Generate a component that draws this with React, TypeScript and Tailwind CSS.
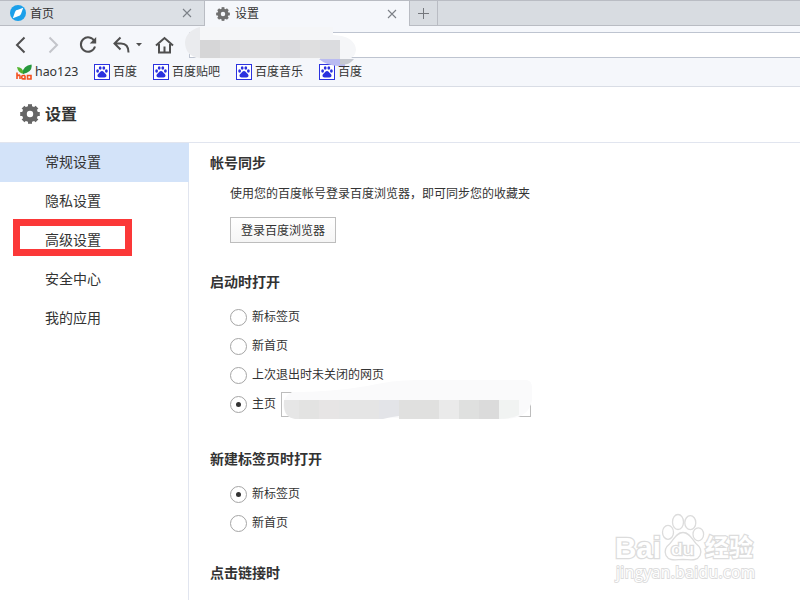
import React from 'react';

const sidebarItems = ['常规设置', '隐私设置', '高级设置', '安全中心', '我的应用'];

const bookmarks = ['百度', '百度贴吧', '百度音乐', '百度'];

const gearAngles = [0, 45, 90, 135, 180, 225, 270, 315];

interface GearProps {
    className: string;
}

const Gear: React.FC<GearProps> = ({ className }) => (
    <svg viewBox="0 0 20 20" className={className} fill="none" stroke="currentColor">
        <circle cx="10" cy="10" r="5.6" strokeWidth="4.8" />
        {gearAngles.map((a) => (
            <path key={a} d="M10 3.5V0.2" strokeWidth="4" transform={`rotate(${a} 10 10)`} />
        ))}
    </svg>
);

const CloseIcon: React.FC = () => (
    <svg viewBox="0 0 10 10" className="size-[10px]" stroke="#7c8087" strokeWidth="1.1">
        <path d="M1 1l8 8M9 1l-8 8" />
    </svg>
);

const Paw: React.FC = () => (
    <svg viewBox="0 0 16 16" className="size-4">
        <rect x="0.5" y="0.5" width="15" height="15" fill="#fff" stroke="#2b32df" />
        <g fill="#2b32df">
            <ellipse cx="3.6" cy="7" rx="1.4" ry="1.7" />
            <ellipse cx="6.2" cy="4" rx="1.4" ry="1.8" />
            <ellipse cx="9.8" cy="4" rx="1.4" ry="1.8" />
            <ellipse cx="12.4" cy="7" rx="1.4" ry="1.7" />
            <path d="M8 6.9c1.5 0 1.9 1.4 3 2.4 1.3 1 1.8 2 1.4 3-.6 1.5-2.6 1.2-4.4 1.2s-3.8.3-4.4-1.2c-.4-1 .1-2 1.4-3 1.1-1 1.5-2.4 3-2.4z" />
        </g>
    </svg>
);

const TabBar: React.FC = () => (
    <div className="flex h-[26px] border-t border-[#b9bcc3] bg-[#d8dce1]">
        <div className="flex w-[205px] items-center border-r border-b border-[#b9bcc3] bg-[#dce0e5] pr-[12px] pl-[10px]">
            <svg viewBox="0 0 16 16" className="size-4">
                <circle cx="8" cy="8" r="8" fill="#1ba0ea" />
                <path d="M13.2 2.8L11 9A3.3 3.3 0 0 1 8 11.2L2.8 13.2 5 7A3.3 3.3 0 0 1 8 4.8z" fill="#fff" />
            </svg>
            <span className="ml-1 grow pt-px">首页</span>
            <CloseIcon />
        </div>
        <div className="flex w-[204px] items-center bg-[#f5f7fb] pr-[12px] pl-[11px]">
            <Gear className="size-[14px] text-[#707070]" />
            <span className="ml-[5px] grow">设置</span>
            <CloseIcon />
        </div>
        <div className="flex w-[29px] items-center justify-center border-x border-b border-[#b9bcc3]">
            <svg viewBox="0 0 11 11" className="size-[11px]" stroke="#74777c">
                <path d="M5.5 0v11M0 5.5h11" />
            </svg>
        </div>
        <div className="grow border-b border-[#b9bcc3]" />
    </div>
);

// toolbar buttons: back, forward, reload, undo, home
const NavIcons: React.FC = () => (
    <svg viewBox="0 0 189 34" className="h-[34px] w-[189px] shrink-0" fill="none" stroke="#4f4f4f" strokeWidth="2">
        <path d="M24.5 11.5L17 19l7.5 7.500" />
        <path d="M49.5 11.5L57 19l-7.5 7.500" stroke="#c3c5ca" />
        <path d="M94.5 15.2A7.200 7.200 0 1 0 95 20.5" />
        <path d="M96.2 11v6.5h-6.500z" fill="#4f4f4f" stroke="none" />
        <path d="M120.500 11.500L114.500 17.500l6 6M115 17.500h6c5 0 7.500 3.500 7.500 9" />
        <path d="M136 17h6l-3 3.200z" fill="#4f4f4f" stroke="none" />
        <path d="M156 19.500l8.500-7.500 8.500 7.500M159 18v8.500h11V18M164.500 26v-5.500" />
    </svg>
);

const AddressSmudge: React.FC = () => (
    <svg viewBox="0 0 172 42" className="absolute -top-[8px] -left-[5px] h-[42px] w-[172px]">
        <path d="M134 34h26v7h-6q-12 0-20-7z" fill="#b9bbf1" />
        <path d="M155 34h14q-4 5-9 5.500h-5z" fill="#c6c9d0" />
        <path d="M15 2h133v8q22 1 23 15-1 8-8 9H15Q0 31 0 17 1 6 15 2z" fill="#f5f6f8" />
        <path d="M15 2Q1 6 0 17q0 14 15 16z" fill="#eaebee" />
        <path d="M15 15h20v18H15z" fill="#d6d6d7" />
        <path d="M35 15h20v18H35z" fill="#dcdcdd" />
        <path d="M55 15h40v18H55z" fill="#dfdfe0" />
        <path d="M95 15h20v18H95z" fill="#dadadd" />
        <path d="M115 15h20v18h-20z" fill="#dfdfe0" />
        <path d="M135 15h20v19h-20z" fill="#dbdcdf" />
    </svg>
);

const Toolbar: React.FC = () => (
    <div className="flex h-[34px] bg-[#f5f7fb]">
        <NavIcons />
        <div className="relative mt-[6px] h-[26px] grow border-y border-l border-[#bec4d0] bg-white">
            <AddressSmudge />
        </div>
    </div>
);

const Bookmarks: React.FC = () => (
    <div className="flex h-[27px] items-center border-b border-[#d9dde5] bg-[#f5f7fb] pb-[3px] pl-4">
        <svg viewBox="0 0 16 16" className="size-4">
            <path d="M1 3q6 0 7 7Q2 9 1 3z" fill="#55b530" />
            <path d="M7 10Q6 2 15.5 0.5 17 8 7 10z" fill="#26973c" />
            <path
                d="M1 8.500v6.500M1 12q3-2 3 .5V15M9 11.500H6.800q-1 0-1 1.200v1q0 1.200 1 1.200H9V11.500M11.500 11.500h3.500v3.500h-3.500z"
                fill="none"
                stroke="#f4511e"
                strokeWidth="1.600"
            />
        </svg>
        <span className="ml-[3px] w-[43px] pt-[2px] text-[12.4px]">hao123</span>
        {bookmarks.map((label, i) => (
            <div key={i} className="ml-4 flex items-center">
                <Paw />
                <span className="ml-[3px]">{label}</span>
            </div>
        ))}
    </div>
);

const Sidebar: React.FC = () => (
    <nav className="w-[189px] shrink-0 border-r border-[#e1e5ef] text-sm">
        {sidebarItems.map((item, i) => (
            <div
                key={item}
                className={`relative flex h-[39px] items-center pb-[2px] pl-[45px] ${i === 0 ? '-mr-px bg-[#d3e3f9]' : ''}`}
            >
                {item}
                {i === 2 && (
                    <div className="absolute top-[-2px] left-[13px] h-[37px] w-[119px] border-[7px] border-[#fb3838]" />
                )}
            </div>
        ))}
    </nav>
);

interface RadioProps {
    label: string;
    checked?: boolean;
    children?: React.ReactNode;
}

const Radio: React.FC<RadioProps> = ({ label, checked, children }) => (
    <div className="flex h-[29px] items-center">
        <span className="flex size-[17px] items-center justify-center rounded-full border border-[#a5a5a5] bg-white">
            {checked && <span className="size-[5px] rounded-full bg-[#333]" />}
        </span>
        <span className="ml-[5px] pb-[2px]">{label}</span>
        {children}
    </div>
);

const HomeSmudge: React.FC = () => (
    <svg viewBox="0 0 250 41" className="absolute -top-[14px] left-0 h-[41px] w-[250px]">
        <path d="M10 13Q50 13 85 7q25-6 50-6h110q5 1 5 8v12q-3 19-28 19h-25v-1h-95l-15 1H13Q2 38 1 27 1 18 10 13z" fill="#fafafb" />
        <path d="M2 21h15v19h-4Q2 38 2 26z" fill="#e6e6e6" />
        <path d="M17 21h20v19H17z" fill="#e3e3e2" />
        <path d="M37 21h20v19H37z" fill="#e7e5e5" />
        <path d="M57 21h40v19H57z" fill="#e5e5e5" />
        <path d="M97 21h20v16q-9 1-16 3h-4z" fill="#e3e4e8" />
        <path d="M117 21h40v19h-40z" fill="#e0e0df" />
        <path d="M157 21h20v19h-20z" fill="#eaeaea" />
        <path d="M177 21h20v19h-20z" fill="#dfe0df" />
        <path d="M197 21h20v19h-20z" fill="#dbdbdb" />
        <path d="M217 21h20v15q-8 4-20 4z" fill="#f1f3f2" />
    </svg>
);

const Content: React.FC = () => (
    <main className="grow pt-[10px] pl-[21px]">
        <h2 className="h-5 text-sm leading-5 font-bold">帐号同步</h2>
        <div className="pl-5">
            <p className="mt-[11px] h-5 leading-5">使用您的百度帐号登录百度浏览器，即可同步您的收藏夹</p>
            <button className="mt-[13px] block h-[26px] w-[106px] border border-[#bdbdbd] bg-linear-to-b from-white to-[#f5f5f5] pt-px text-xs">
                登录百度浏览器
            </button>
        </div>
        <h2 className="mt-[29px] h-5 text-sm leading-5 font-bold">启动时打开</h2>
        <div className="mt-[11px] pl-5">
            <Radio label="新标签页" />
            <Radio label="新首页" />
            <Radio label="上次退出时未关闭的网页" />
            <Radio label="主页" checked>
                <div className="relative ml-[5px] h-[25px] w-[250px] border border-[#bdbdbd]">
                    <HomeSmudge />
                </div>
            </Radio>
        </div>
        <h2 className="mt-[30px] h-5 text-sm leading-5 font-bold">新建标签页时打开</h2>
        <div className="mt-[11px] pl-5">
            <Radio label="新标签页" checked />
            <Radio label="新首页" />
        </div>
        <h2 className="mt-[25px] h-5 text-sm leading-5 font-bold">点击链接时</h2>
    </main>
);

const Watermark: React.FC = () => (
    <svg viewBox="0 0 160 80" className="absolute right-[35px] bottom-[10px] h-[80px] w-[160px]" fill="#fff" stroke="#dcdcdc" strokeWidth="1.3">
        <g fontFamily="Liberation Sans, Noto Sans CJK SC, sans-serif" fontWeight="700">
            <text x="10" y="48" fontSize="30" textLength="46" lengthAdjust="spacingAndGlyphs" strokeWidth="2.6" paintOrder="stroke">Bai</text>
            <ellipse cx="63" cy="22.3" rx="5.5" ry="7" />
            <ellipse cx="73" cy="12" rx="5.5" ry="7.5" />
            <ellipse cx="85.3" cy="12.7" rx="5.5" ry="7" />
            <ellipse cx="93.3" cy="24.3" rx="5.300" ry="6.500" />
            <path d="M78 22.500c7 0 9 7 13 11 5 4 6 8 4 12-3 6-10 4-17 4s-14 2-17-4c-2-4-1-8 4-12 4-4 6-11 13-11z" />
            <text x="66" y="45" fontSize="17" textLength="23" lengthAdjust="spacingAndGlyphs" fontWeight="400" strokeWidth="2.400" paintOrder="stroke">du</text>
            <text x="100" y="46" fontSize="24" textLength="48" strokeWidth="2.4" paintOrder="stroke">经验</text>
        </g>
        <text x="11" y="67.5" fontSize="15.5" textLength="139" fontFamily="Open Sans, sans-serif" strokeWidth="1.8" paintOrder="stroke">jingyan.baidu.com</text>
    </svg>
);

const App: React.FC = () => {
    return (
        <div className="relative flex h-screen w-full flex-col overflow-hidden bg-white font-['Noto_Sans','Noto_Sans_CJK_SC',sans-serif] text-xs text-[#333]">
            <TabBar />
            <Toolbar />
            <Bookmarks />
            <header className="flex h-[56px] shrink-0 items-center border-b border-[#e1e5ef] pb-px pl-5">
                <Gear className="size-5 text-[#666]" />
                <h1 className="ml-[5px] pb-px text-base font-bold">设置</h1>
            </header>
            <div className="flex min-h-0 grow">
                <Sidebar />
                <Content />
            </div>
            <Watermark />
        </div>
    );
};

export default App;
